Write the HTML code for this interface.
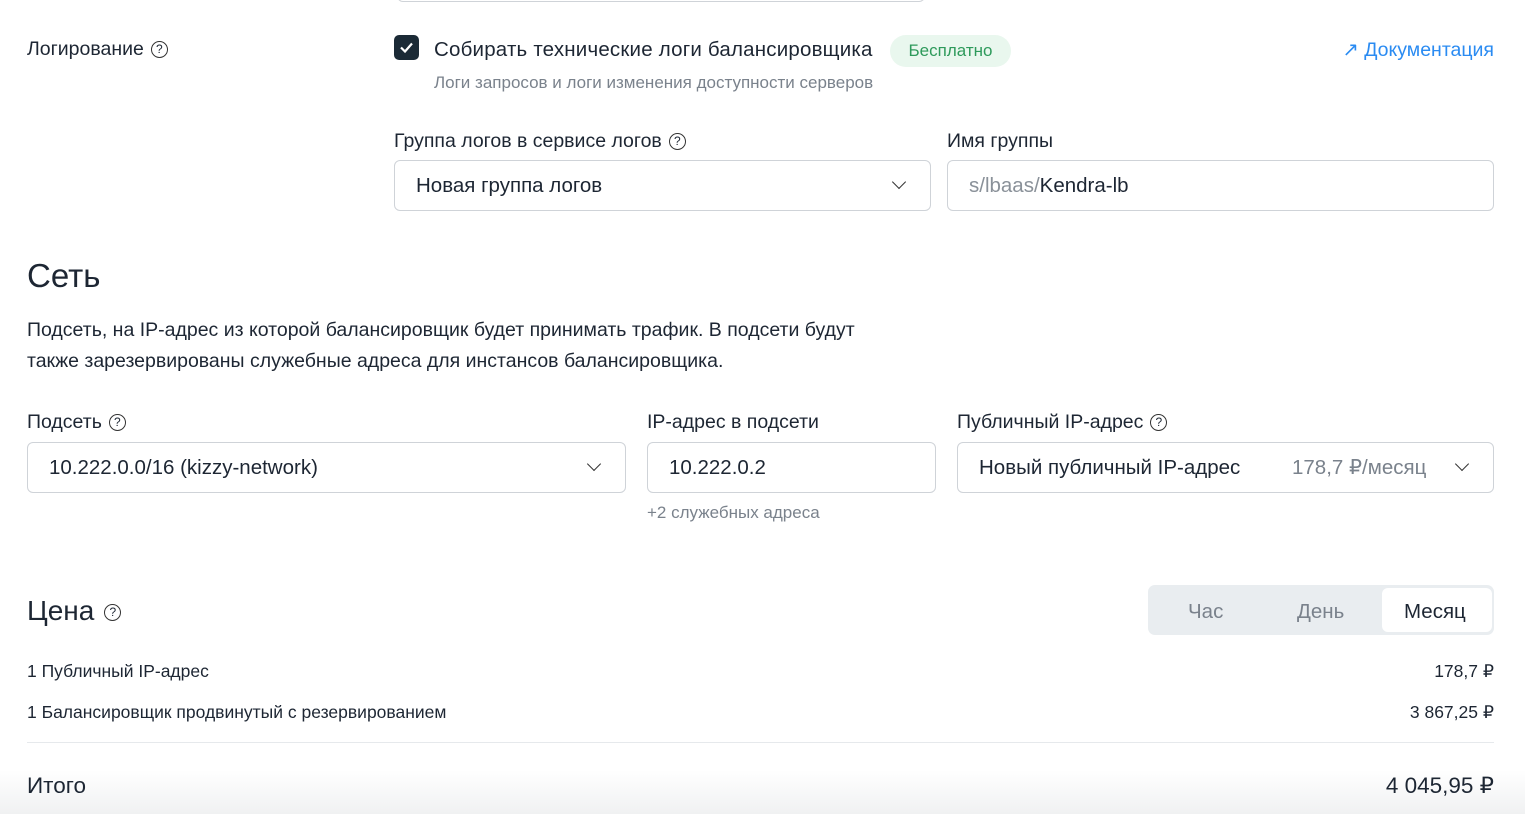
<!DOCTYPE html>
<html><head><meta charset="utf-8"><style>
*{box-sizing:border-box;margin:0;padding:0}
body{width:1525px;height:814px;overflow:hidden;background:#fff;font-family:"Liberation Sans",sans-serif;color:#1d2633;position:relative}
.a{position:absolute;white-space:nowrap}
.q{display:inline-block;width:17px;height:17px;border:1.5px solid #333;border-radius:50%;font-size:12px;text-align:center;line-height:14px;vertical-align:2px;margin-left:7px}
.box{position:absolute;border:1.5px solid #cfd3d8;border-radius:6px;height:51px;font-size:20.5px;line-height:50px;padding-left:21px;color:#1d2633}
.chev{position:absolute;right:26px;top:16px;width:10px;height:10px;border-right:1.8px solid #333;border-bottom:1.8px solid #333;transform:rotate(45deg)}
</style></head><body>
<div class="a" style="left:397px;top:-4px;width:528px;height:6px;border:1.5px solid #cfd3d8;border-top:none;border-radius:0 0 6px 6px"></div>
<div class="a" style="left:27px;top:38px;font-size:19.5px">Логирование<span class="q">?</span></div>
<div class="a" style="left:394px;top:35px;width:25px;height:25px;background:#1b2a36;border-radius:5px"><svg width="25" height="25"><path d="M7 12.5l4 4 7-8" stroke="#fff" stroke-width="2.2" fill="none"/></svg></div>
<div class="a" style="left:434px;top:38px;font-size:20.5px;letter-spacing:0.2px">Собирать технические логи балансировщика</div>
<div class="a" style="left:890px;top:35px;width:121px;height:32px;background:#e9f7ee;border-radius:16px;color:#2e9a5b;font-size:17px;text-align:center;line-height:32px">Бесплатно</div>
<div class="a" style="right:31px;top:38px;font-size:19.5px;color:#2a8bf2">↗ Документация</div>
<div class="a" style="left:434px;top:73px;font-size:17px;color:#7a828c">Логи запросов и логи изменения доступности серверов</div>
<div class="a" style="left:394px;top:130px;font-size:19.5px">Группа логов в сервисе логов<span class="q">?</span></div>
<div class="a" style="left:947px;top:130px;font-size:19.5px">Имя группы</div>
<div class="box" style="left:394px;top:160px;width:537px">Новая группа логов<div class="chev"></div></div>
<div class="box" style="left:947px;top:160px;width:547px"><span style="color:#8a9199">s/lbaas/</span>Kendra-lb</div>
<div class="a" style="left:27px;top:257px;font-size:33px">Сеть</div>
<div class="a" style="left:27px;top:315px;font-size:19.5px;line-height:31px;white-space:normal;width:885px">Подсеть, на IP-адрес из которой балансировщик будет принимать трафик. В подсети будут также зарезервированы служебные адреса для инстансов балансировщика.</div>
<div class="a" style="left:27px;top:411px;font-size:19.5px">Подсеть<span class="q">?</span></div>
<div class="a" style="left:647px;top:411px;font-size:19.5px">IP-адрес в подсети</div>
<div class="a" style="left:957px;top:411px;font-size:19.5px">Публичный IP-адрес<span class="q">?</span></div>
<div class="box" style="left:27px;top:442px;width:599px">10.222.0.0/16 (kizzy-network)<div class="chev"></div></div>
<div class="box" style="left:647px;top:442px;width:289px">10.222.0.2</div>
<div class="box" style="left:957px;top:442px;width:537px">Новый публичный IP-адрес<span style="position:absolute;left:334px;color:#7a828c">178,7 ₽/месяц</span><div class="chev"></div></div>
<div class="a" style="left:647px;top:503px;font-size:17px;color:#7a828c">+2 служебных адреса</div>
<div class="a" style="left:27px;top:595px;font-size:28px">Цена<span class="q" style="vertical-align:4px;margin-left:10px">?</span></div>
<div class="a" style="left:1148px;top:585px;width:346px;height:50px;background:#e9edf0;border-radius:7px"></div>
<div class="a" style="left:1382px;top:588px;width:110px;height:44px;background:#fff;border-radius:6px"></div>
<div class="a" style="left:1188px;top:600px;font-size:20.5px;color:#7a828c">Час</div>
<div class="a" style="left:1297px;top:600px;font-size:20.5px;color:#7a828c">День</div>
<div class="a" style="left:1404px;top:600px;font-size:20.5px">Месяц</div>
<div class="a" style="left:27px;top:661px;font-size:17.5px">1 Публичный IP-адрес</div>
<div class="a" style="right:31px;top:661px;font-size:17.5px">178,7 ₽</div>
<div class="a" style="left:27px;top:702px;font-size:17.5px">1 Балансировщик продвинутый с резервированием</div>
<div class="a" style="right:31px;top:702px;font-size:17.5px">3 867,25 ₽</div>
<div class="a" style="left:27px;top:742px;width:1467px;height:1px;background:#e6e9ec"></div>
<div class="a" style="left:0;top:770px;width:1525px;height:44px;background:linear-gradient(#fff,#f0f1f2)"></div>
<div class="a" style="left:27px;top:773px;font-size:22.5px">Итого</div>
<div class="a" style="right:31px;top:773px;font-size:22.5px">4 045,95 ₽</div>
</body></html>
